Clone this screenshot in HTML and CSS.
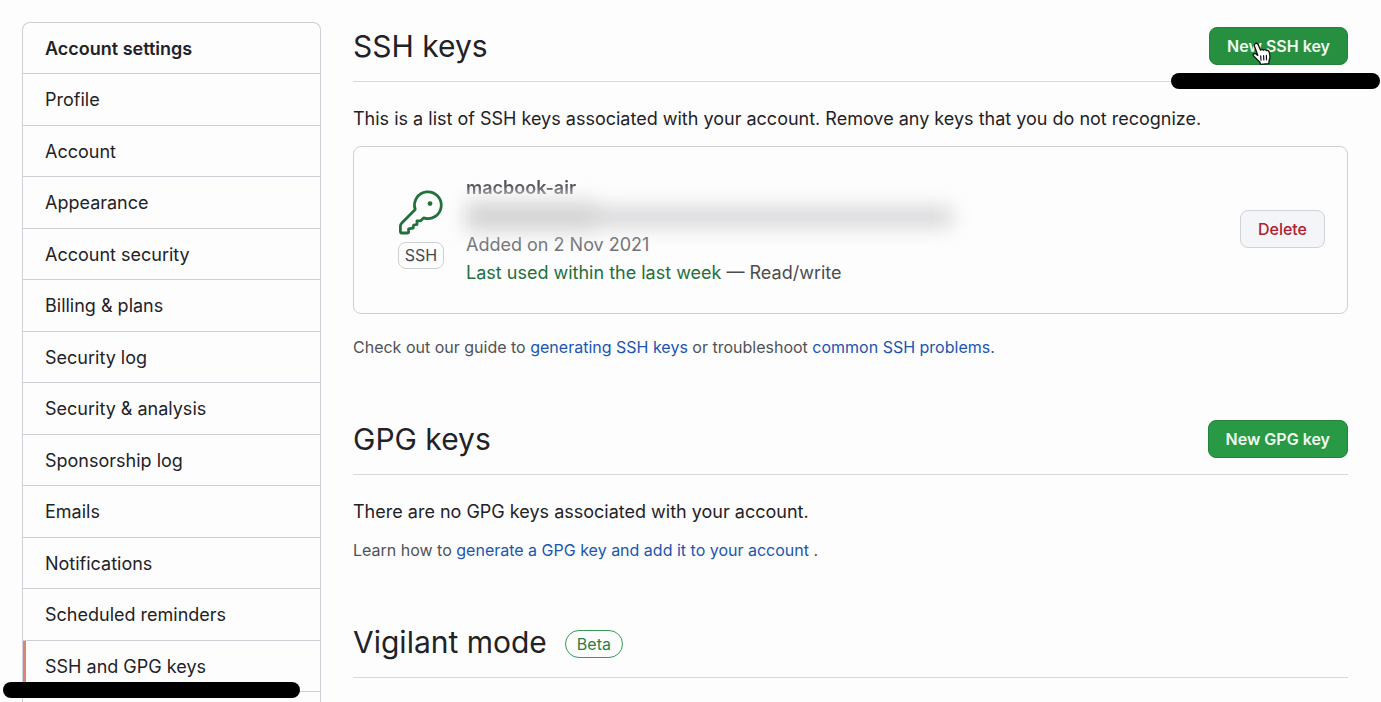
FILE: index.html
```html
<!DOCTYPE html>
<html lang="en">
<head>
<meta charset="utf-8">
<meta name="viewport" content="width=device-width, initial-scale=1">
<title>SSH and GPG keys</title>
<link rel="stylesheet" href="styles.css">
</head>
<body>
<div class="page">
  <nav class="menu" aria-label="Account settings">
    <h2 class="menu-heading">Account settings</h2>
    <a class="menu-item" href="#">Profile</a>
    <a class="menu-item" href="#">Account</a>
    <a class="menu-item" href="#">Appearance</a>
    <a class="menu-item" href="#">Account security</a>
    <a class="menu-item" href="#">Billing &amp; plans</a>
    <a class="menu-item" href="#">Security log</a>
    <a class="menu-item" href="#">Security &amp; analysis</a>
    <a class="menu-item" href="#">Sponsorship log</a>
    <a class="menu-item" href="#">Emails</a>
    <a class="menu-item" href="#">Notifications</a>
    <a class="menu-item" href="#">Scheduled reminders</a>
    <a class="menu-item current" href="#" aria-current="page">SSH and GPG keys</a>
  </nav>

  <main class="content">
    <section class="section">
      <header class="section-head">
        <h1 class="title">SSH keys</h1>
        <button class="btn btn-primary btn-hover" type="button">New SSH key</button>
      </header>
      <p class="lead">This is a list of SSH keys associated with your account. Remove any keys that you do not recognize.</p>
      <div class="key-card">
        <div class="key-kind">
          <svg class="key-icon" viewBox="0 0 48 48" fill="none" stroke="#22703a" stroke-width="2.8" stroke-linejoin="round" stroke-linecap="round" aria-hidden="true">
            <path d="M18.2 20.5 A13.4 13.4 0 1 1 26.6 28.9 L23.8 31.8 H20 V35.5 L16.6 36.2 L16.2 39 L11.6 39.8 V43 Q11.6 44 10.4 44 H4.6 Q3.4 44 3.4 42.6 V37.2 Q3.4 35.4 4.8 34 L18.2 20.5"/>
            <circle cx="33" cy="14.6" r="2.4" fill="#22703a" stroke="none"/>
          </svg>
          <span class="kind-label">SSH</span>
        </div>
        <div class="key-info">
          <strong class="key-name">macbook-air</strong>
          <span class="fingerprint" aria-hidden="true"></span>
          <span class="added">Added on 2 Nov 2021</span>
          <span class="usage"><span class="recent">Last used within the last week</span> — Read/write</span>
        </div>
        <button class="btn btn-danger" type="button">Delete</button>
      </div>
      <p class="note">Check out our guide to <a href="#">generating SSH keys</a> or troubleshoot <a href="#">common SSH problems.</a></p>
    </section>

    <section class="section">
      <header class="section-head">
        <h1 class="title">GPG keys</h1>
        <button class="btn btn-primary" type="button">New GPG key</button>
      </header>
      <p class="lead">There are no GPG keys associated with your account.</p>
      <p class="note">Learn how to <a href="#">generate a GPG key and add it to your account</a> .</p>
    </section>

    <section class="section">
      <header class="section-head">
        <h1 class="title">Vigilant mode</h1>
        <span class="beta">Beta</span>
      </header>
    </section>
  </main>

  <span class="marker marker-top"></span>
  <span class="marker marker-bottom"></span>
  <svg class="pointer" viewBox="0 0 20 24" aria-hidden="true">
    <path d="M3.2 1.6 C4.4 .8 5.6 1.4 6.2 2.8 L8.6 8.2 C9.2 7.2 10.8 7.2 11.4 8.2 C12.2 7.2 13.8 7.4 14.3 8.6 C15.5 8 17 8.8 17.2 10.2 C18 13 18.6 15.4 17.2 18.2 L16.8 21.6 L8.6 22.4 L7.8 20 C5.6 18.4 3.6 15.8 1.4 13.6 C.6 12.2 2.2 11 3.6 11.8 L5.8 13.4 L2.4 4 C2 3 2.4 2.1 3.2 1.6 Z" fill="#fff" stroke="#111" stroke-width="1.3" stroke-linejoin="round"/>
    <path d="M8.7 13.8 L9 18.2 M11.6 13.6 L11.8 18 M14.4 13.4 L14.5 17.8" stroke="#111" stroke-width="1.2" stroke-linecap="round"/>
  </svg>
</div>
</body>
</html>
```
FILE: styles.css
```css
* {
  box-sizing: border-box;
}

body {
  margin: 0;
  background: #fdfdfe;
  color: #1f2226;
  font-family: Inter, "Liberation Sans", sans-serif;
  font-size: 18px;
  line-height: 26px;
}

a {
  color: #1a55b0;
  text-decoration: none;
}

h1, h2, p {
  margin: 0;
}

.page {
  position: relative;
  display: flex;
  gap: 32px;
  height: 100vh;
  padding: 22px 33px 0 22px;
  overflow: hidden;
}

.menu {
  flex: 0 0 299px;
  border: 1px solid #cdd0d5;
  border-bottom: 0;
  border-radius: 8px 8px 0 0;
}

.menu-heading,
.menu-item {
  display: block;
  padding: 13px 22px 11px;
  border-bottom: 1px solid #cdd0d5;
  color: #1f2226;
  font-size: 18px;
  font-weight: 400;
}

.menu-heading {
  font-weight: 600;
}

.menu-item:nth-child(even) {
  padding-bottom: 12px;
}

.current {
  padding-left: 19px;
  border-left: 3px solid #dc8475;
}

.content {
  flex: 1;
  min-width: 0;
}

.section {
  margin-bottom: 55px;
}

.section-head {
  display: flex;
  align-items: center;
  height: 60px;
  padding-bottom: 12px;
  border-bottom: 1px solid #d5d8dc;
}

.title {
  font-size: 30px;
  font-weight: 400;
  line-height: 48px;
}

.btn {
  height: 38px;
  padding: 0 17px;
  border: 1px solid #cfd2d7;
  border-radius: 8px;
  font-family: inherit;
  font-size: 16px;
  font-weight: 500;
}

.btn-primary {
  margin-left: auto;
  border-color: #26813d;
  background: #289a45;
  color: #f2fbf0;
  font-weight: 600;
}

.btn-hover {
  background: #268f40;
}

.btn-danger {
  margin-left: auto;
  background: #f4f5f8;
  color: #b0202f;
}

.lead {
  margin-top: 24px;
}

.key-card {
  display: flex;
  align-items: center;
  margin-top: 14px;
  padding: 23px 22px 26px;
  border: 1px solid #cdd0d5;
  border-radius: 8px;
}

.key-kind {
  display: flex;
  flex-direction: column;
  align-items: center;
  gap: 5px;
  width: 46px;
  margin: 0 22px;
}

.key-icon {
  width: 48px;
  height: 48px;
}

.kind-label {
  padding: 0 6px;
  border: 1px solid #cdd0d5;
  border-radius: 8px;
  color: #45484d;
  font-size: 16px;
  line-height: 25px;
}

.key-info {
  display: flex;
  flex-direction: column;
  padding-top: 4px;
  color: #4a4d52;
  line-height: 28px;
}

.key-name {
  background: linear-gradient(#4c4f54 40%, #909195 75%);
  background-clip: text;
  color: transparent;
  font-weight: 600;
}

.fingerprint {
  width: 486px;
  height: 29px;
  background:
    linear-gradient(#d2d2d3, #d2d2d3) left top / 130px 100% no-repeat,
    linear-gradient(#d2d2d3, #d2d2d3) left bottom 5px / 100% 18px no-repeat;
  filter: blur(10px);
}

.added {
  color: #707276;
}

.recent {
  color: #22703a;
}

.note {
  margin-top: 20px;
  color: #4f5257;
  font-size: 16px;
}

.lead + .note {
  margin-top: 12px;
}

.beta {
  margin-top: 4px;
  margin-left: 18px;
  padding: 0 11px;
  border: 1px solid #399955;
  border-radius: 14px;
  color: #2a7d42;
  font-size: 16px;
}

.marker {
  position: absolute;
  height: 16px;
  border-radius: 8px;
  background: #000;
}

.marker-top {
  top: 73px;
  right: 1px;
  width: 209px;
}

.marker-bottom {
  top: 682px;
  left: 3px;
  width: 297px;
}

.pointer {
  position: absolute;
  top: 42px;
  right: 109px;
  width: 20px;
  height: 24px;
}
```
